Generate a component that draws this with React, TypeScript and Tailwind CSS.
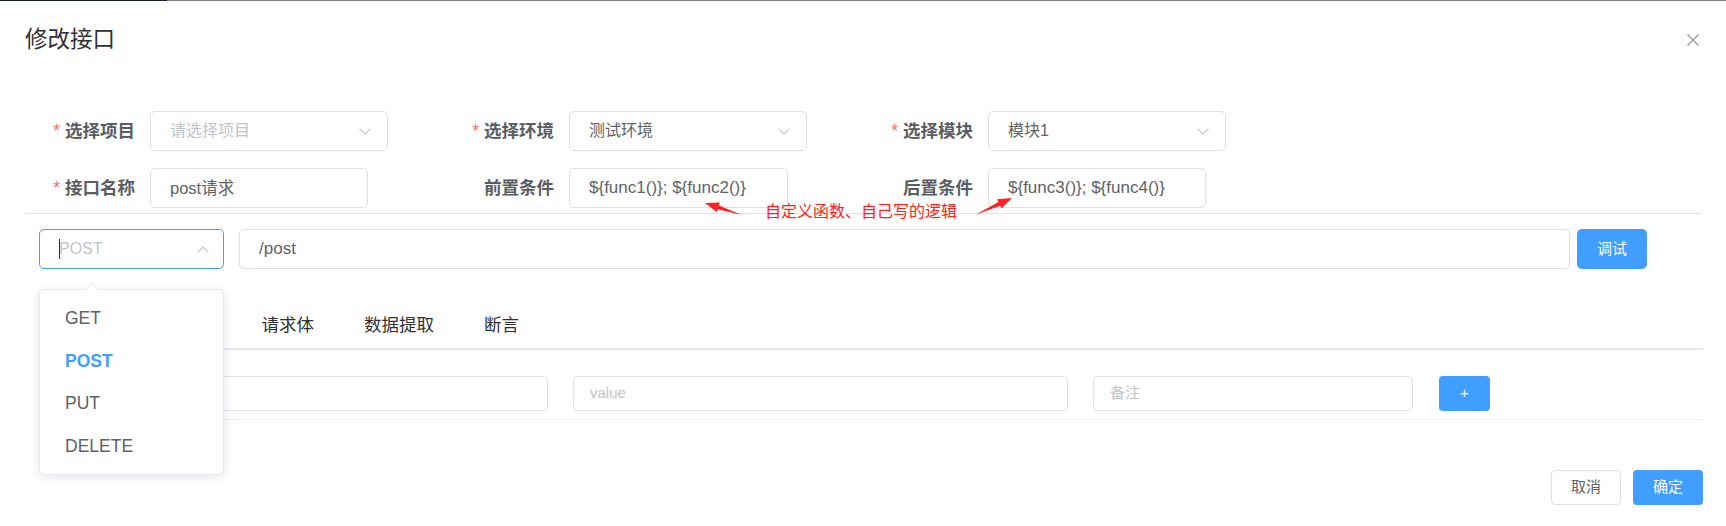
import React from "react";

const Chevron = ({ up }: { up?: boolean }) => (
  <svg width="12" height="7" viewBox="0 0 12 7" className="shrink-0">
    <polyline
      points={up ? "0.6,6.4 6,1 11.4,6.4" : "0.6,0.6 6,6 11.4,0.6"}
      fill="none"
      stroke="#c0c4cc"
      strokeWidth="1.2"
    />
  </svg>
);

const Field = ({
  label,
  required,
  children,
}: {
  label: string;
  required?: boolean;
  children: React.ReactNode;
}) => (
  <div className="flex items-center h-10">
    <div className="w-[125px] shrink-0 pr-[15px] text-right text-[17.5px] leading-10 font-bold text-[#5a5d63]">
      {required && <span className="text-[#f56c6c] font-normal mr-[5px]">*</span>}
      {label}
    </div>
    {children}
  </div>
);

const App = () => {
  const methods = ["GET", "POST", "PUT", "DELETE"];

  return (
    <div className="relative w-[1726px] h-[526px] overflow-hidden bg-white font-['Liberation_Sans','Noto_Sans_CJK_SC',sans-serif]">
      {/* top edge */}
      <div className="flex h-px">
        <div className="w-[167px] bg-[#1c2130]" />
        <div className="flex-1 bg-[#7d7d7d]" />
      </div>

      {/* header */}
      <div className="flex h-[78px] items-center justify-between pl-[25px] pr-[27px]">
        <span className="text-[22.5px] text-[#303133]">修改接口</span>
        <svg width="12" height="12" viewBox="0 0 12 12">
          <path d="M0.5 0.5 L11.5 11.5 M11.5 0.5 L0.5 11.5" stroke="#909399" strokeWidth="1.2" />
        </svg>
      </div>

      {/* form */}
      <div className="mx-[25px] mt-[32px] grid grid-cols-4 gap-y-[17px]">
        <Field label="选择项目" required>
          <div className="flex h-10 w-[238px] items-center justify-between rounded-[5px] border border-[#dcdfe6] pl-[19px] pr-[16px] text-[16px] text-[#c0c4cc]">
            请选择项目
            <Chevron />
          </div>
        </Field>
        <Field label="选择环境" required>
          <div className="flex h-10 w-[238px] items-center justify-between rounded-[5px] border border-[#dcdfe6] pl-[19px] pr-[16px] text-[16px] text-[#606266]">
            测试环境
            <Chevron />
          </div>
        </Field>
        <Field label="选择模块" required>
          <div className="flex h-10 w-[238px] items-center justify-between rounded-[5px] border border-[#dcdfe6] pl-[19px] pr-[16px] text-[16px] text-[#606266]">
            模块1
            <Chevron />
          </div>
        </Field>
        <div />
        <Field label="接口名称" required>
          <div className="flex h-10 w-[218px] items-center rounded-[5px] border border-[#dcdfe6] pl-[19px] text-[16.5px] text-[#606266]">
            post请求
          </div>
        </Field>
        <Field label="前置条件">
          <div className="flex h-10 w-[219px] items-center rounded-[5px] border border-[#dcdfe6] pl-[19px] text-[17px] text-[#606266] whitespace-nowrap">
            {"${func1()}; ${func2()}"}
          </div>
        </Field>
        <Field label="后置条件">
          <div className="flex h-10 w-[218px] items-center rounded-[5px] border border-[#dcdfe6] pl-[19px] text-[17px] text-[#606266] whitespace-nowrap">
            {"${func3()}; ${func4()}"}
          </div>
        </Field>
        <div />
      </div>

      <div className="mx-[25px] mt-[5px] h-px bg-[#f0dfe2]" />

      {/* method + url */}
      <div className="ml-[39px] mt-[15px] flex h-10 items-center">
        <div className="flex h-10 w-[185px] items-center justify-between rounded-[5px] border border-[#409eff] pl-[19px] pr-[14px] text-[16px] text-[#c0c4cc]">
          <span className="flex items-center">
            <span className="h-[20px] w-px bg-[#303133]" />
            <span className="-ml-px">POST</span>
          </span>
          <Chevron up />
        </div>
        <div className="ml-[15px] flex h-10 w-[1331px] items-center rounded-[5px] border border-[#dcdfe6] pl-[19px] text-[17px] text-[#606266]">
          /post
        </div>
        <button className="ml-[7px] h-10 w-[70px] rounded-[5px] bg-[#409eff] text-[15px] text-white">调试</button>
      </div>

      {/* tabs (first two sit under the open dropdown) */}
      <div className="ml-[39px] mr-[23px] mt-[33px] flex h-[48px] items-center gap-[50px] border-b-2 border-[#e4e7ed] text-[17.5px] text-[#303133]">
        <span className="w-[172.5px] shrink-0" />
        <span>请求体</span>
        <span>数据提取</span>
        <span>断言</span>
      </div>

      {/* param row */}
      <div className="ml-[39px] mr-[23px] mt-[26px] flex items-center border-b border-[#ebeef5] pb-[8px] text-[15px]">
        <div className="ml-[14px] h-[35px] w-[495px] rounded-[5px] border border-[#dcdfe6]" />
        <div className="ml-[25px] flex h-[35px] w-[495px] items-center rounded-[5px] border border-[#dcdfe6] pl-[16px] text-[#c0c4cc]">
          value
        </div>
        <div className="ml-[25px] flex h-[35px] w-[320px] items-center rounded-[5px] border border-[#dcdfe6] pl-[16px] text-[#c0c4cc]">
          备注
        </div>
        <button className="ml-[26px] h-[35px] w-[51px] rounded-[4px] bg-[#409eff] text-[15px] text-white">+</button>
      </div>

      {/* footer */}
      <div className="mr-[23px] mt-[50px] flex justify-end gap-[12px]">
        <button className="h-[35px] w-[70px] rounded-[4px] border border-[#dcdfe6] bg-white text-[15px] text-[#606266]">取消</button>
        <button className="h-[35px] w-[70px] rounded-[4px] bg-[#409eff] text-[15px] text-white">确定</button>
      </div>

      {/* method dropdown */}
      <div className="absolute left-[39px] top-[289px] w-[185px] rounded-[5px] border border-[#e4e7ed] bg-white py-[7px] shadow-[0_2px_12px_rgba(0,0,0,0.1)]">
        <div className="absolute -top-[7px] left-[45px] h-0 w-0 border-x-[7px] border-b-[7px] border-x-transparent border-b-[#e4e7ed]" />
        <div className="absolute -top-[6px] left-[45px] h-0 w-0 border-x-[7px] border-b-[7px] border-x-transparent border-b-white" />
        {methods.map((m) => (
          <div
            key={m}
            className={
              m === "POST"
                ? "flex h-[42.5px] items-center pl-[25px] text-[17.5px] font-bold text-[#409eff]"
                : "flex h-[42.5px] items-center pl-[25px] text-[17.5px] text-[#606266]"
            }
          >
            {m}
          </div>
        ))}
      </div>

      {/* annotation */}
      <svg className="pointer-events-none absolute inset-0" width="1726" height="526">
        <polygon
          points="742,215 718.9,205.4 719.8,202.5 705,203 716.8,212.1 717.7,209.2"
          fill="#ff2020"
        />
        <polygon
          points="975,215 1000.1,205.7 1001.4,208.4 1012,198 997.2,199.3 998.5,202"
          fill="#ff2020"
        />
      </svg>
      <div className="absolute left-[765px] top-[201px] text-[16px] leading-[21px] text-[#ff2020] whitespace-nowrap">
        自定义函数、自己写的逻辑
      </div>
    </div>
  );
};

export default App;
